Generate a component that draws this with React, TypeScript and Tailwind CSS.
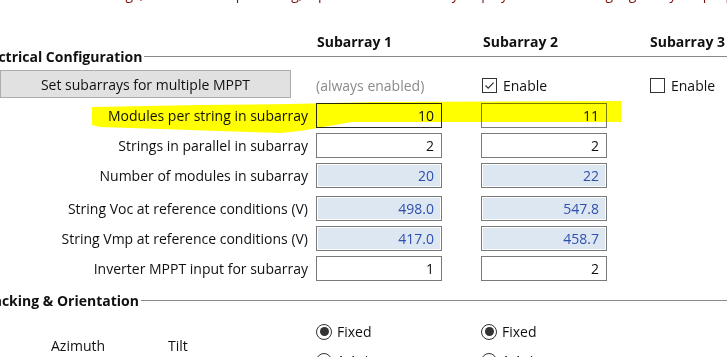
import React from "react";

type Row = {
  label: string;
  a: string;
  b: string;
  readOnly?: boolean;
  gapTop?: string;
};

const rows: Row[] = [
  { label: "Modules per string in subarray", a: "10", b: "11" },
  { label: "Strings in parallel in subarray", a: "2", b: "2" },
  { label: "Number of modules in subarray", a: "20", b: "22", readOnly: true },
  { label: "String Voc at reference conditions (V)", a: "498.0", b: "547.8", readOnly: true, gapTop: "mt-[3px]" },
  { label: "String Vmp at reference conditions (V)", a: "417.0", b: "458.7", readOnly: true },
  { label: "Inverter MPPT input for subarray", a: "1", b: "2" },
];

function Field({ value, readOnly, focused }: { value: string; readOnly?: boolean; focused?: boolean }) {
  return (
    <div
      className={`h-[25px] w-[126px] border flex items-center justify-end pr-[7px] ${
        focused ? "border-[#2a2a2a]" : "border-[#7a7a7a]"
      } ${readOnly ? "bg-[#dde7f2] shadow-[inset_0_0_0_1px_#ffffff] text-[#2f4fae]" : "bg-white text-[#111]"}`}
    >
      {value}
    </div>
  );
}

function Section({ title, shift }: { title: string; shift: string }) {
  return (
    <div className="flex items-center h-[16px]">
      <span className={`font-bold text-[14px] text-[#111] whitespace-nowrap ${shift}`}>{title}</span>
      <div className="flex-1 h-px bg-[#8a8a8a]" />
    </div>
  );
}

function CheckBox({ checked }: { checked?: boolean }) {
  return (
    <span className="w-[15px] h-[15px] border border-[#333] bg-white flex items-center justify-center">
      {checked && (
        <svg width="11" height="11" viewBox="0 0 11 11">
          <path d="M1.5 5.5 L4.2 8.2 L9.6 2.6" fill="none" stroke="#333" strokeWidth="1.2" />
        </svg>
      )}
    </span>
  );
}

function Radio({ checked }: { checked?: boolean }) {
  return (
    <span className="w-[16px] h-[16px] rounded-full border border-[#333] bg-white flex items-center justify-center">
      {checked && <span className="w-[9px] h-[9px] rounded-full bg-[#333]" />}
    </span>
  );
}

export default function App() {
  return (
    <div
      className="relative w-[727px] h-[357px] overflow-hidden bg-white text-[14px] text-[#111]"
      style={{ fontFamily: '"Open Sans", "Noto Sans", sans-serif' }}
    >
      {/* clipped intro text */}
      <div className="h-[6px] overflow-hidden">
        <p className="-mt-[15px] pl-[96px] text-[#7a1010] whitespace-nowrap leading-[18px]">
          strings, and modules per string, inputs in each subarray display there as the highlight in your property pp
        </p>
      </div>

      {/* column headers */}
      <div className="grid grid-cols-[316px_166px_168px_1fr] mt-[25px] h-[17px] items-center font-bold text-[14px] whitespace-nowrap">
        <div />
        <div className="pl-[1px]">Subarray 1</div>
        <div className="pl-[1px]">Subarray 2</div>
        <div>Subarray 3</div>
      </div>

      <Section title="Electrical Configuration" shift="-ml-[22px] mr-[2px]" />

      {/* MPPT row */}
      <div className="grid grid-cols-[316px_166px_168px_1fr] mt-[6px] h-[28px] items-center">
        <div className="pr-[25px]">
          <button className="w-[291px] h-[28px] bg-[#e1e1e1] border border-[#adadad] text-[14px] text-[#111]">
            Set subarrays for multiple MPPT
          </button>
        </div>
        <div className="text-[#8a8a8a] pt-[2px]">(always enabled)</div>
        <div className="flex items-center gap-[6px] pt-[2px]">
          <CheckBox checked />
          <span>Enable</span>
        </div>
        <div className="flex items-center gap-[6px] pt-[2px]">
          <CheckBox />
          <span>Enable</span>
        </div>
      </div>

      {/* inputs */}
      <div className="flex flex-col gap-[5px] mt-[5px]">
        {rows.map((r, i) => (
          <div key={i} className={`grid grid-cols-[316px_165px_1fr] h-[25px] items-center ${r.gapTop ?? ""}`}>
            <div className="text-right pr-[8px] whitespace-nowrap">{r.label}</div>
            <Field value={r.a} readOnly={r.readOnly} focused={i === 0} />
            <Field value={r.b} readOnly={r.readOnly} />
          </div>
        ))}
      </div>

      <div className="mt-[11px]">
        <Section title="Tracking & Orientation" shift="-ml-[21px] mr-[2px]" />
      </div>

      {/* orientation */}
      <div className="grid grid-cols-[316px_165px_1fr] mt-[13px]">
        <div className="flex pl-[51px] pt-[14px] gap-[63px]">
          <span>Azimuth</span>
          <span>Tilt</span>
        </div>
        <div className="flex flex-col gap-[8px]">
          <div className="flex items-center gap-[5px]">
            <Radio checked />
            <span>Fixed</span>
          </div>
          <div className="flex items-center gap-[5px]">
            <Radio />
            <span>1 Axis</span>
          </div>
        </div>
        <div className="flex flex-col gap-[8px]">
          <div className="flex items-center gap-[5px]">
            <Radio checked />
            <span>Fixed</span>
          </div>
          <div className="flex items-center gap-[5px]">
            <Radio />
            <span>1 Axis</span>
          </div>
        </div>
      </div>

      {/* highlighter stroke */}
      <svg
        className="absolute left-0 top-0 mix-blend-multiply pointer-events-none"
        width="727"
        height="357"
        viewBox="0 0 727 357"
      >
        <path
          d="M92 107 L200 105 L290 104 L373 102 L621 101 L621 122 L352 122 L300 131 L280 133 L190 130 L100 127 L92 125 Z"
          fill="#ffff00"
        />
      </svg>
    </div>
  );
}
